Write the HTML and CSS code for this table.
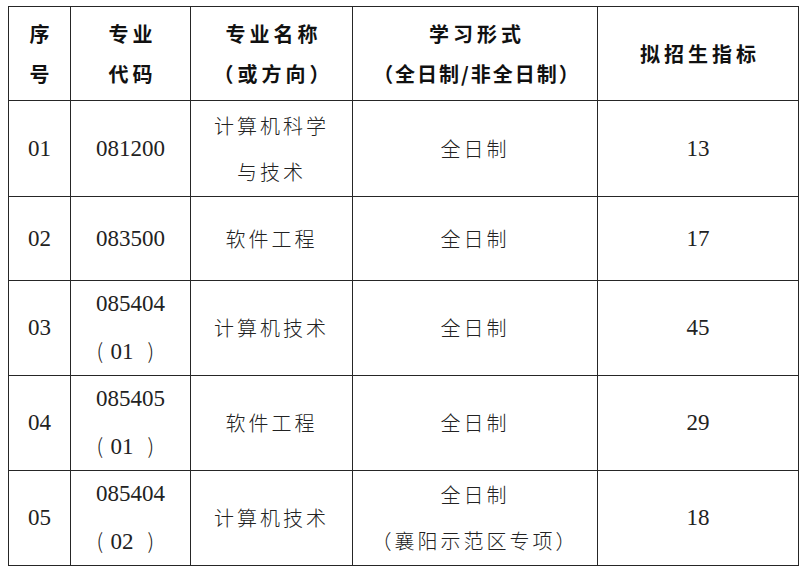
FILE: index.html
```html
<!DOCTYPE html>
<html lang="zh-CN">
<head>
<meta charset="utf-8">
<link rel="stylesheet" href="styles.css">
</head>
<body>
<table class="plan">
  <colgroup>
    <col class="c1"><col class="c2"><col class="c3"><col class="c4"><col class="c5">
  </colgroup>
  <thead>
    <tr class="r-head">
      <th>序<br>号</th>
      <th>专业<br>代码</th>
      <th>专业名称<br>（或方向）</th>
      <th>学习形式<br><span class="sub">（全日制/非全日制）</span></th>
      <th>拟招生指标</th>
    </tr>
  </thead>
  <tbody>
    <tr class="r1">
      <td class="num">01</td>
      <td class="num">081200</td>
      <td class="cjk">计算机科学<br>与技术</td>
      <td class="cjk">全日制</td>
      <td class="num">13</td>
    </tr>
    <tr class="r2">
      <td class="num">02</td>
      <td class="num">083500</td>
      <td class="cjk">软件工程</td>
      <td class="cjk">全日制</td>
      <td class="num">17</td>
    </tr>
    <tr class="r3">
      <td class="num">03</td>
      <td class="num">085404<br><span class="lp">(</span>01<span class="rp">)</span></td>
      <td class="cjk">计算机技术</td>
      <td class="cjk">全日制</td>
      <td class="num">45</td>
    </tr>
    <tr class="r4">
      <td class="num">04</td>
      <td class="num">085405<br><span class="lp">(</span>01<span class="rp">)</span></td>
      <td class="cjk">软件工程</td>
      <td class="cjk">全日制</td>
      <td class="num">29</td>
    </tr>
    <tr class="r5">
      <td class="num">05</td>
      <td class="num">085404<br><span class="lp">(</span>02<span class="rp">)</span></td>
      <td class="cjk">计算机技术</td>
      <td class="cjk">全日制<br>（襄阳示范区专项）</td>
      <td class="num">18</td>
    </tr>
  </tbody>
</table>
</body>
</html>
```
FILE: styles.css
```css
html, body {
  background: #ffffff;
}
body {
  margin: 6px 0 0 8px;
  color: #1a1a1a;
}
.plan {
  border-collapse: collapse;
  table-layout: fixed;
  width: 790px;
}
.c1 { width: 62px; }
.c2 { width: 120px; }
.c3 { width: 162px; }
.c4 { width: 245px; }
.c5 { width: 201px; }

.plan th,
.plan td {
  border: 1px solid #262626;
  padding: 0;
  text-align: center;
  vertical-align: middle;
}
.plan th {
  font-family: "Noto Sans CJK SC", sans-serif;
  font-weight: 700;
  font-size: 20px;
  line-height: 40px;
  letter-spacing: 4px;
  padding-left: 4px;
  color: #111;
}
.sub {
  letter-spacing: 2px;
}
.r-head { height: 94px; }
.r1 { height: 96px; }
.r2 { height: 84px; }
.r3 { height: 95px; }
.r4 { height: 94px; }
.r5 { height: 94px; }

.num {
  font-family: "Liberation Serif", "Noto Sans CJK SC", serif;
  font-size: 23px;
  line-height: 46px;
  color: #222;
}
.lp,
.rp {
  display: inline-block;
  box-sizing: border-box;
  text-align: left;
  font-family: "Noto Sans CJK SC", sans-serif;
  font-weight: 300;
  font-size: 21px;
}
.lp { width: 14px; }
.rp { width: 31px; padding-left: 14px; }
.cjk {
  font-family: "Noto Sans CJK SC", sans-serif;
  font-weight: 300;
  font-size: 20px;
  line-height: 46px;
  letter-spacing: 3px;
  padding-left: 3px;
  color: #222;
}
```
